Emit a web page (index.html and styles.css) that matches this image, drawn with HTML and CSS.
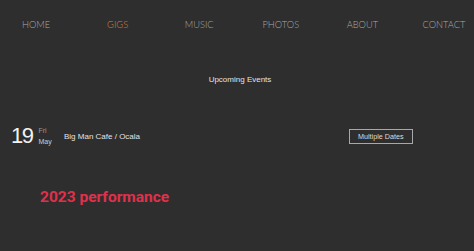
FILE: index.html
```html
<!DOCTYPE html>
<html lang="en">
<head>
  <meta charset="UTF-8">
  <meta name="viewport" content="width=device-width, initial-scale=1.0">
  <title>Gigs</title>
  <link rel="stylesheet" href="styles.css">
</head>
<body>
  <header>
    <nav>
      <a href="#home">HOME</a>
      <a href="#gigs" class="active">GIGS</a>
      <a href="#music">MUSIC</a>
      <a href="#photos">PHOTOS</a>
      <a href="#about">ABOUT</a>
      <a href="#contact">CONTACT</a>
    </nav>
  </header>

  <section class="events">
    <h2>Upcoming Events</h2>
    <div class="event-row">
      <div class="date">
        <span class="day">19</span>
        <span class="dow">Fri<br><em>May</em></span>
      </div>
      <div class="venue">Big Man Cafe / Ocala</div>
      <button class="dates-btn">Multiple Dates</button>
    </div>
  </section>

  <section class="past">
    <h3>2023 performance</h3>
  </section>
</body>
</html>
```

FILE: styles.css
```css
:root {
  --bg: #2e2e2e;
  --nav-color: #a9a9a9;
  --accent: #d9843c;
  --red: #e2304a;
}
* { box-sizing: border-box; margin: 0; padding: 0; }
html, body {
  background: var(--bg);
  font-family: "Liberation Sans", Arial, sans-serif;
  color: #ddd;
  overflow: hidden;
}
/* Header */
header { padding-top: 19px; height: 60px; }
nav {
  display: grid; grid-template-columns: repeat(6, 81.6px);
  margin-left: -4.8px;
}
nav a {
  text-align: center; text-decoration: none;
  color: var(--nav-color);
  font-family: "Lato", sans-serif; font-size: 9.3px; font-weight: 300;
  line-height: 12px;
}
nav a.active { color: var(--accent); }
/* Events */
.events h2 {
  font-weight: normal; font-size: 8px; text-align: center;
  color: #e4e4e4; line-height: 12px; margin-top: 14px; padding-left: 6px;
}
.event-row {
  display: flex; align-items: center;
  margin-top: 39px; padding-left: 11px; height: 22px;
}
.date { display: flex; align-items: center; gap: 6px; width: 53px; }
.day {
  font-size: 22px; font-weight: 300; color: #f2f2f2; line-height: 22px;
  letter-spacing: -1.5px;
}
.dow { font-size: 7px; line-height: 11px; color: #999; }
.dow em { font-style: normal; color: #cfcfcf; }
.venue { font-size: 8px; color: #e2e2e2; width: 285px; }
.dates-btn {
  background: transparent; border: 1px solid #a8a8a8; color: #dcdcdc;
  font-family: inherit; font-size: 7.2px; padding: 2px 8px; line-height: 9px;
}
/* Past */
.past { padding: 41px 0 0 40px; }
.past h3 {
  color: var(--red); font-family: "Roboto", sans-serif;
  font-size: 15.5px; font-weight: bold; line-height: 18px;
}
```
